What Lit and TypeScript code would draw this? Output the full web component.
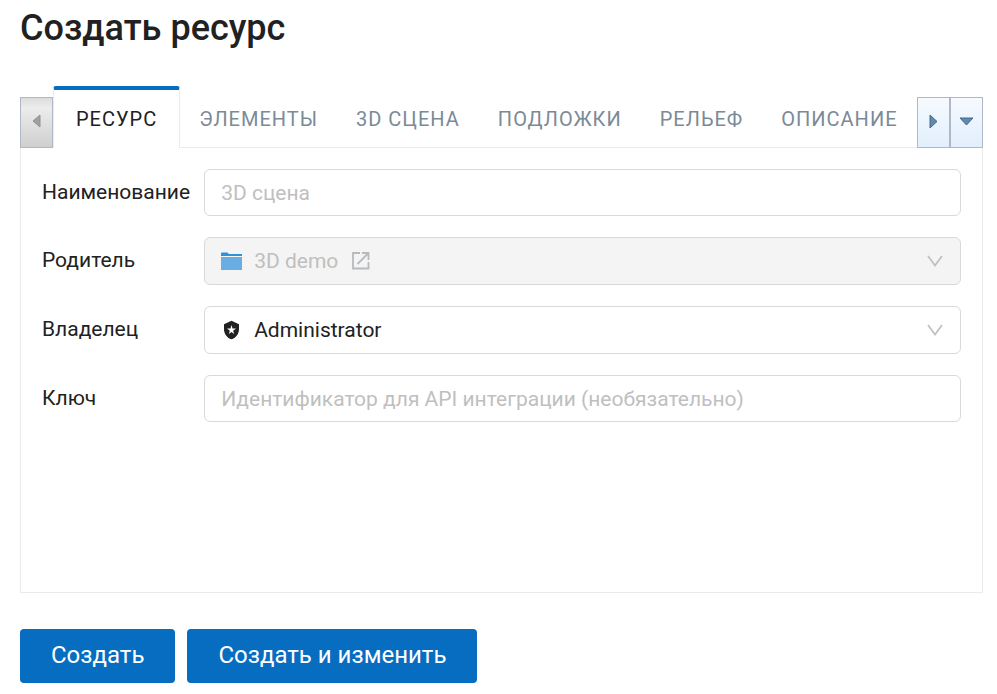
import { LitElement, html, css, svg } from "lit";
import { customElement, state } from "lit/decorators.js";

const folderIcon = svg`<svg class="icon folder" viewBox="0 0 22 19" aria-hidden="true">
  <path fill="#2d91dc" d="M0 1.500Q0 .5 1 .5H6Q7 .5 7.300 1.300L7.500 2H21V4H0Z"/>
  <path fill="#6aade4" d="M0 5H21V18H0Z"/>
</svg>`;

const shieldIcon = svg`<svg class="icon shield" viewBox="0 0 24 24" aria-hidden="true">
  <path fill="#212121" fill-rule="evenodd" d="M12 1 3 5v6c0 5.550 3.840 10.740 9 12 5.160-1.260 9-6.450 9-12V5l-9-4zm0 5 1.200 4.200 4.200.100-3.400 2.500 1.200 4-3.200-2.500-3.200 2.500 1.200-4-3.400-2.500 4.200-.100z"/>
</svg>`;

const openIcon = svg`<svg viewBox="0 0 18 18" width="18" height="18" aria-hidden="true">
  <path fill="none" stroke="currentColor" stroke-width="1.800" d="M8 1H1V16.500H16.500V10M10 1H16.500V8M16.500 1 5.500 12"/>
</svg>`;

const chevronIcon = svg`<svg class="chevron" viewBox="0 0 16 12" aria-hidden="true">
  <path fill="none" stroke="#bfbfbf" stroke-width="1.700" d="M1 1 8 10.500 15 1"/>
</svg>`;

@customElement("app-root")
export class AppRoot extends LitElement {
  @state() private active = 0;

  private tabs = ["Ресурс", "Элементы", "3D сцена", "Подложки", "Рельеф", "Описание"];

  static styles = css`
    :host {
      display: block;
      padding: 4px 14px 11px 20px;
      font: 21px/32px Roboto, sans-serif;
      color: #212121;
      background: #fff;
    }
    * { box-sizing: border-box; }
    button, input, select {
      font: inherit;
      color: inherit;
      letter-spacing: inherit;
      margin: 0;
    }
    h1 {
      margin: 0 0 34px;
      font-size: 36px;
      line-height: 48px;
      font-weight: 500;
    }
    .bar {
      display: flex;
      align-items: flex-end;
      height: 62px;
    }
    .scroll {
      display: flex;
      flex: none;
      align-items: center;
      justify-content: center;
      width: 33px;
      height: 51px;
      padding: 0 0 3px;
      border: 1px solid #b0b7c6;
      background: linear-gradient(#f6faff, #e1effc);
    }
    .scroll:disabled { background: linear-gradient(#dcdcdc, #ececec 20%, #cfcfcf); }
    .tabs {
      display: flex;
      flex: 1;
      min-width: 0;
      height: 62px;
      overflow: hidden;
    }
    .tab {
      flex: none;
      padding: 5px 19px 0;
      border: 0;
      border-bottom: 1px solid #ebebeb;
      background: none;
      font-size: 20px;
      letter-spacing: 1px;
      text-transform: uppercase;
      color: #7b8a97;
    }
    .tab.on {
      padding: 0 22px;
      border: 1px solid #ebebeb;
      border-top: 4px solid #076dc1;
      border-bottom: 0;
      border-radius: 3px 3px 0 0;
      color: #212121;
    }
    .rest { flex: 1; border-bottom: 1px solid #ebebeb; }
    .panel {
      min-height: 445px;
      padding: 21px;
      border: 1px solid #ebebeb;
      border-top: 0;
    }
    form {
      display: grid;
      grid-template-columns: auto 1fr;
      gap: 21px 14px;
    }
    label { padding-top: 7px; }
    .box {
      display: flex;
      align-items: center;
      position: relative;
      width: 100%;
      height: 48px;
      border: 1px solid #d9d9d9;
      border-radius: 6px;
      background: #fff;
    }
    input.box { height: 47px; padding: 0 16px; outline: none; }
    input::placeholder { color: #bfbfbf; opacity: 1; }
    .box select {
      flex: 1;
      align-self: stretch;
      width: 100%;
      padding: 0 0 0 49px;
      border: 0;
      background: none;
      appearance: none;
      outline: none;
      opacity: 1;
    }
    .box.off { background: #f4f4f4; color: #bfbfbf; }
    .icon { position: absolute; left: 16px; pointer-events: none; }
    .folder { width: 22px; height: 19px; }
    .shield { width: 21px; height: 20px; }
    .chevron {
      position: absolute;
      right: 17px;
      width: 16px;
      height: 12px;
      pointer-events: none;
    }
    .link {
      position: absolute;
      left: 147px;
      display: flex;
      color: #b7babd;
    }
    .actions { display: flex; gap: 12px; margin-top: 36px; }
    .primary {
      height: 54px;
      padding: 0 31px 2px;
      border: 0;
      border-radius: 4px;
      background: #076dc1;
      color: #fff;
      font-size: 24px;
    }
  `;

  render() {
    return html`
      <h1>Создать ресурс</h1>
      <div class="bar">
        <button class="scroll" disabled aria-label="Назад">
          <svg width="9" height="14" viewBox="0 0 9 14"><path fill="#a0a0a0" stroke="#929292" d="M8 1v12L1 7z"/></svg>
        </button>
        <div class="tabs" role="tablist">
          ${this.tabs.map((t, i) => html`<button
            class="tab ${i === this.active ? "on" : ""}"
            role="tab"
            aria-selected=${i === this.active}
            @click=${() => (this.active = i)}
          >${t}</button>`)}
          <span class="rest"></span>
        </div>
        <button class="scroll" aria-label="Вперёд">
          <svg width="9" height="15" viewBox="0 0 9 15"><path fill="#6089ae" stroke="#45698c" d="M1 1v13L8 7.500z"/></svg>
        </button>
        <button class="scroll" aria-label="Все вкладки">
          <svg width="15" height="9" viewBox="0 0 15 9"><path fill="#6089ae" stroke="#45698c" d="M1 1h13L7.500 8z"/></svg>
        </button>
      </div>
      <div class="panel" role="tabpanel">
        <form>
          <label for="name">Наименование</label>
          <input class="box" id="name" placeholder="3D сцена" />
          <label for="parent">Родитель</label>
          <div class="box off">
            ${folderIcon}
            <select id="parent" disabled><option>3D demo</option></select>
            <a class="link" href="#parent" aria-label="Открыть">${openIcon}</a>
            ${chevronIcon}
          </div>
          <label for="owner">Владелец</label>
          <div class="box">
            ${shieldIcon}
            <select id="owner"><option>Administrator</option></select>
            ${chevronIcon}
          </div>
          <label for="key">Ключ</label>
          <input class="box" id="key" placeholder="Идентификатор для API интеграции (необязательно)" />
        </form>
      </div>
      <div class="actions">
        <button class="primary">Создать</button>
        <button class="primary">Создать и изменить</button>
      </div>
    `;
  }
}
